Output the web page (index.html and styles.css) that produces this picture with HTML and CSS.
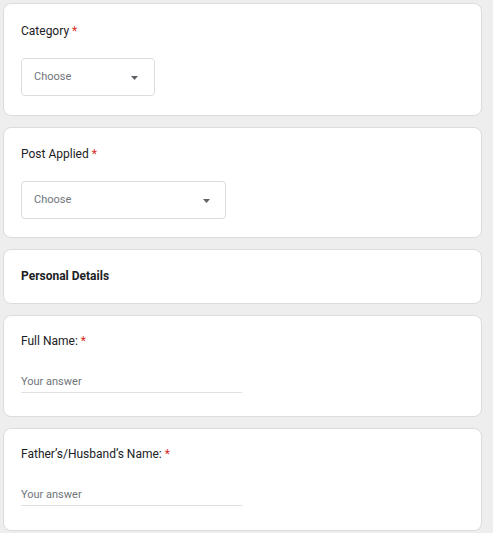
FILE: index.html
```html
<!DOCTYPE html>
<html>
<head>
<meta charset="utf-8">
<link rel="stylesheet" href="styles.css">
</head>
<body>
<div class="page">
  <div class="card q-select">
    <div class="label">Category <span class="req">*</span></div>
    <div class="select sel-narrow">
      <span class="placeholder">Choose</span>
      <svg class="arrow" width="7" height="4" viewBox="0 0 7 4"><path d="M0 0h7L3.5 4z" fill="#5f6368"/></svg>
    </div>
  </div>
  <div class="card q-select q2">
    <div class="label">Post Applied <span class="req">*</span></div>
    <div class="select sel-wide">
      <span class="placeholder">Choose</span>
      <svg class="arrow" width="7" height="4" viewBox="0 0 7 4"><path d="M0 0h7L3.5 4z" fill="#5f6368"/></svg>
    </div>
  </div>
  <div class="card section">
    <div class="section-title">Personal Details</div>
  </div>
  <div class="card q-text">
    <div class="label">Full Name: <span class="req">*</span></div>
    <div class="answer">Your answer</div>
  </div>
  <div class="card q-text q5">
    <div class="label">Father’s/Husband’s Name: <span class="req">*</span></div>
    <div class="answer">Your answer</div>
  </div>
</div>
</body>
</html>
```

FILE: styles.css
```css
html, body {
  margin: 0;
  padding: 0;
  background: #eeeeee;
}
body {
  font-family: Roboto, "Liberation Sans", Arial, sans-serif;
  color: #202124;
}
.page {
  width: 479px;
  padding: 3px 0 0 3px;
  display: flex;
  flex-direction: column;
  gap: 11px;
}
.card {
  background: #ffffff;
  border: 1px solid #dadce0;
  border-radius: 8px;
  padding: 19px 17px 19px 17px;
}
.label {
  font-size: 12px;
  line-height: 16px;
  color: #202124;
}
.req {
  color: #d93025;
}
.q-select .label {
  margin-bottom: 19px;
}
.q2 {
  padding-top: 18px;
  padding-bottom: 18px;
}
.select {
  height: 36px;
  border: 1px solid #dadce0;
  border-radius: 4px;
  display: flex;
  align-items: center;
  justify-content: space-between;
  padding: 0 16px 0 12px;
  box-sizing: content-box;
}
.sel-narrow { width: 104px; }
.sel-wide { width: 176px; padding-right: 15px; }
.placeholder {
  font-size: 11px;
  color: #70757a;
  margin-top: -1px;
}
.arrow {
  display: block;
  margin-top: 1px;
}
.section {
  padding-top: 18px;
  padding-bottom: 19px;
}
.section-title {
  font-size: 12px;
  line-height: 16px;
  font-weight: 700;
  color: #202124;
}
.q-text {
  padding-top: 17px;
  padding-bottom: 23px;
}
.q5 {
  padding-bottom: 24px;
}
.q-text .label {
  margin-bottom: 25px;
}
.answer {
  width: 221px;
  font-size: 11px;
  line-height: 16px;
  color: #70757a;
  padding-bottom: 2px;
  border-bottom: 1px solid #e0e0e0;
}
```
